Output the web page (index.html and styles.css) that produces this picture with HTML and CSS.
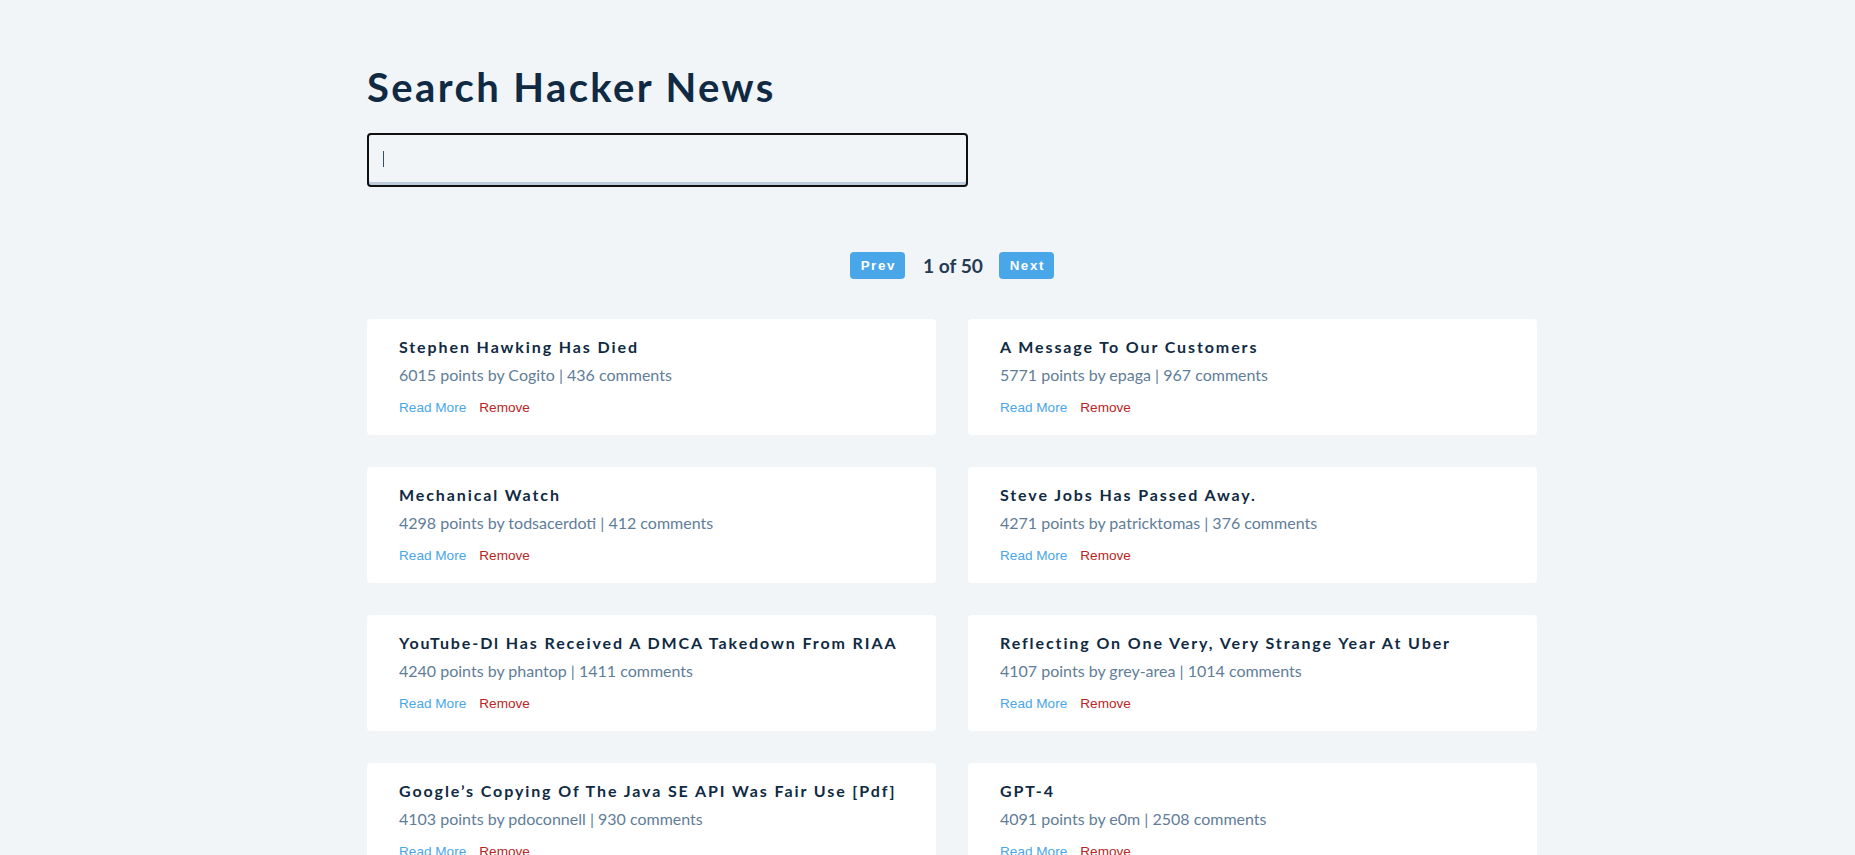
FILE: index.html
```html
<!DOCTYPE html>
<html lang="en">
<head>
<meta charset="utf-8">
<title>Search Hacker News</title>
<link rel="stylesheet" href="styles.css">
</head>
<body>
<main class="page">
  <form class="search-form">
    <h2 class="page-title">Search Hacker News</h2>
    <div class="form-input"><span class="caret"></span></div>
  </form>

  <div class="btn-container">
    <button class="page-btn" type="button">Prev</button>
    <p class="page-count">1 of 50</p>
    <button class="page-btn" type="button">Next</button>
  </div>

  <section class="stories">
    <article class="story">
      <h4 class="title">Stephen Hawking Has Died</h4>
      <p class="info">6015 points by Cogito | 436 comments</p>
      <div class="actions"><a class="url" href="#">Read More</a><button class="remove-btn" type="button">Remove</button></div>
    </article>
    <article class="story">
      <h4 class="title">A Message To Our Customers</h4>
      <p class="info">5771 points by epaga | 967 comments</p>
      <div class="actions"><a class="url" href="#">Read More</a><button class="remove-btn" type="button">Remove</button></div>
    </article>
    <article class="story">
      <h4 class="title">Mechanical Watch</h4>
      <p class="info">4298 points by todsacerdoti | 412 comments</p>
      <div class="actions"><a class="url" href="#">Read More</a><button class="remove-btn" type="button">Remove</button></div>
    </article>
    <article class="story">
      <h4 class="title">Steve Jobs Has Passed Away.</h4>
      <p class="info">4271 points by patricktomas | 376 comments</p>
      <div class="actions"><a class="url" href="#">Read More</a><button class="remove-btn" type="button">Remove</button></div>
    </article>
    <article class="story">
      <h4 class="title">YouTube-Dl Has Received A DMCA Takedown From RIAA</h4>
      <p class="info">4240 points by phantop | 1411 comments</p>
      <div class="actions"><a class="url" href="#">Read More</a><button class="remove-btn" type="button">Remove</button></div>
    </article>
    <article class="story">
      <h4 class="title">Reflecting On One Very, Very Strange Year At Uber</h4>
      <p class="info">4107 points by grey-area | 1014 comments</p>
      <div class="actions"><a class="url" href="#">Read More</a><button class="remove-btn" type="button">Remove</button></div>
    </article>
    <article class="story">
      <h4 class="title">Google’s Copying Of The Java SE API Was Fair Use [Pdf]</h4>
      <p class="info">4103 points by pdoconnell | 930 comments</p>
      <div class="actions"><a class="url" href="#">Read More</a><button class="remove-btn" type="button">Remove</button></div>
    </article>
    <article class="story">
      <h4 class="title">GPT-4</h4>
      <p class="info">4091 points by e0m | 2508 comments</p>
      <div class="actions"><a class="url" href="#">Read More</a><button class="remove-btn" type="button">Remove</button></div>
    </article>
  </section>
</main>
</body>
</html>
```
FILE: styles.css
```css
* { box-sizing: border-box; }

html, body { margin: 0; padding: 0; }

body {
  background: #f1f5f8;
  color: #102a43;
  font-family: Lato, "Open Sans", sans-serif;
  font-size: 16px;
  line-height: 1.5;
}

.page {
  width: 1855px;
  padding: 62px 318px 80px 367px;
}

.search-form {
  margin: 0;
  width: 1170px;
}

.page-title {
  margin: 0;
  font-size: 40px;
  line-height: 50px;
  font-weight: 700;
  letter-spacing: 2.4px;
  color: #102a43;
}

.form-input {
  margin-top: 21px;
  width: 601px;
  height: 54px;
  border: 2px solid #101010;
  border-radius: 4px;
  box-shadow: inset 0 -3px 0 #bcccdc;
  display: flex;
  align-items: center;
  padding-left: 14px;
}

.caret {
  display: block;
  width: 1px;
  height: 16px;
  margin-top: -2px;
  background: #334e68;
}

.btn-container {
  margin-top: 64px;
  width: 1170px;
  display: flex;
  justify-content: center;
  align-items: center;
}

.page-btn {
  margin: 0 16px;
  height: 27px;
  width: 55px;
  padding: 0;
  border: 0;
  border-radius: 4px;
  background: #49a6e9;
  color: #fff;
  font-family: "Liberation Sans", Arial, sans-serif;
  font-size: 13.33px;
  font-weight: 700;
  letter-spacing: 1.6px;
  text-indent: 1.6px;
}

.page-count {
  margin: 1px 0 0 2px;
  font-size: 19.2px;
  font-weight: 700;
  color: #243b53;
  line-height: 27px;
}

.stories {
  margin-top: 40px;
  width: 1170px;
  display: grid;
  grid-template-columns: 569px 569px;
  gap: 32px;
  align-items: start;
}

.story {
  background: #fff;
  border-radius: 4px;
  padding: 16px 32px;
  height: 116px;
}

.title {
  margin: 0 0 4px;
  font-size: 16px;
  line-height: 24px;
  font-weight: 700;
  letter-spacing: 1.9px;
  color: #102a43;
}

.info {
  margin: 0 0 10px;
  color: #617d98;
  line-height: 24px;
}

.actions {
  display: flex;
  align-items: baseline;
  line-height: 22px;
  font-family: "Liberation Sans", Arial, sans-serif;
  font-size: 13.6px;
}

.url {
  color: #49a6e9;
  text-decoration: none;
  margin-right: 13px;
}

.remove-btn {
  background: transparent;
  border: 0;
  padding: 0;
  color: #bb2525;
  font-family: "Liberation Sans", Arial, sans-serif;
  font-size: 13.6px;
  line-height: 22px;
  cursor: pointer;
}
```
